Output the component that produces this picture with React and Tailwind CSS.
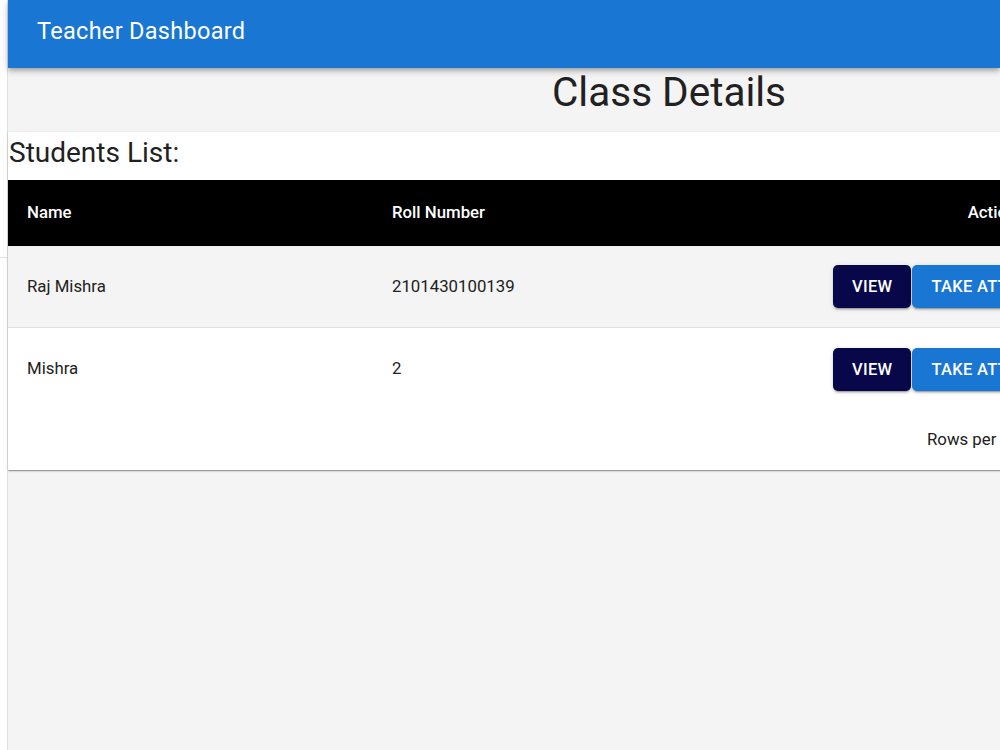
import React from 'react';

const students = [
  { name: 'Raj Mishra', roll: '2101430100139' },
  { name: 'Mishra', roll: '2' },
];

const btnShadow =
  'shadow-[0_3px_1px_-2px_rgba(0,0,0,0.2),0_2px_2px_0_rgba(0,0,0,0.14),0_1px_5px_0_rgba(0,0,0,0.12)]';

function StudentRow({ student, striped, last }) {
  return (
    <div
      className={`grid grid-cols-[364px_282px_1fr] h-[82px] items-center text-[16.8px] text-[#212121] ${
        striped ? 'bg-[#f4f4f4]' : 'bg-white'
      } ${last ? '' : 'border-b border-[#e0e0e0]'}`}
    >
      <div className="px-[19px]">{student.name}</div>
      <div className="px-[20px]">{student.roll}</div>
      <div className="pl-[179px] flex items-center gap-px">
        <button
          className={`bg-[#07074a] text-white font-medium uppercase tracking-[0.3px] text-[16.5px] leading-[29px] px-[19px] py-[7px] rounded-[5px] ${btnShadow}`}
        >
          View
        </button>
        <button
          className={`bg-[#1976d2] text-white font-medium uppercase tracking-[0.3px] text-[16.5px] leading-[29px] px-[19px] py-[7px] rounded-[5px] whitespace-nowrap ${btnShadow}`}
        >
          Take Attendance
        </button>
      </div>
    </div>
  );
}

export default function App() {
  return (
    <div className="w-[1000px] h-[750px] overflow-hidden flex bg-[#f4f4f4] font-['Roboto','Liberation_Sans',sans-serif]">
      {/* drawer edge */}
      <aside className="w-2 shrink-0 bg-white border-r border-[#e0e0e0]">
        <div className="h-[258px] border-b border-[#e0e0e0]" />
      </aside>

      <main className="flex-1 min-w-0 flex flex-col">
        <header className="relative z-10 h-[68px] shrink-0 bg-[#1976d2] flex items-center pb-1 pl-[29px] shadow-[0_2px_4px_-1px_rgba(0,0,0,0.2),0_4px_5px_0_rgba(0,0,0,0.14),0_1px_10px_0_rgba(0,0,0,0.12)]">
          <h1 className="text-white text-[23.5px] font-normal tracking-[0.3px]">Teacher Dashboard</h1>
        </header>

        <div className="w-[1322px] shrink-0">
          <h2 className="text-center text-[40.5px] leading-[49px] text-[#212121] mb-[15px]">Class Details</h2>

          <section className="bg-white shadow-[0_2px_1px_-1px_rgba(0,0,0,0.2),0_1px_1px_0_rgba(0,0,0,0.14),0_1px_3px_0_rgba(0,0,0,0.12)]">
            <div className="h-[48px] pt-[2px]">
              <h3 className="text-[28px] leading-[37px] text-[#212121] pl-px">Students List:</h3>
            </div>

            <div className="grid grid-cols-[364px_282px_1fr] h-[66px] items-center bg-black text-white text-[16.8px] font-medium">
              <div className="px-[19px]">Name</div>
              <div className="px-[20px]">Roll Number</div>
              <div className="text-center">Action</div>
            </div>

            {students.map((s, i) => (
              <StudentRow key={s.roll} student={s} striped={i % 2 === 0} last={i === students.length - 1} />
            ))}

            <div className="h-[60px] flex items-center pl-[919px] text-[16.8px] text-[#212121] gap-8">
              <span>Rows per page:</span>
              <span>5</span>
              <span>1–2 of 2</span>
            </div>
          </section>
        </div>
      </main>
    </div>
  );
}
